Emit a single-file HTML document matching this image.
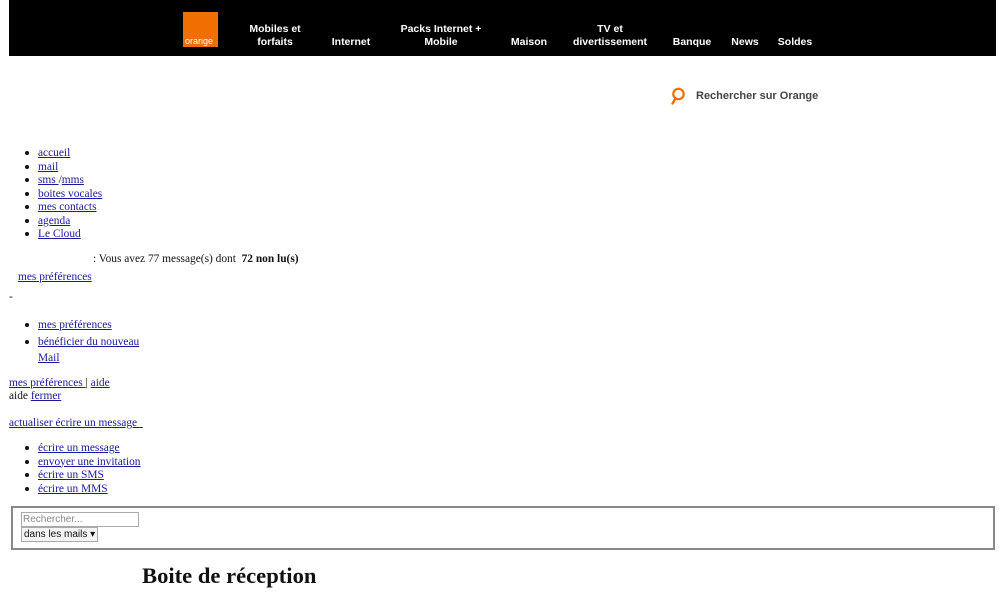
<!DOCTYPE html>
<html><head><meta charset="utf-8"><style>
body{margin:0;width:999px;height:602px;background:#fff;font-family:"Liberation Serif",serif;font-size:11.4px;color:#111;position:relative;overflow:hidden}
a{color:#1a1a9a;text-decoration:underline}
.a{position:absolute;white-space:nowrap}
.bar{position:absolute;left:9px;top:0;width:987px;height:56px;background:#000}
.nav{position:absolute;color:#fff;font-family:"Liberation Sans",sans-serif;font-weight:bold;font-size:10.5px;text-align:center;line-height:13px}
.logo{position:absolute;left:183px;top:12px;width:35px;height:35px;background:#f16e00}
.logo span{position:absolute;left:2px;bottom:1px;color:#fff;font:9px "Liberation Sans",sans-serif}
ul{margin:0;padding:0;list-style:none}
li{position:relative;padding-left:0}
li:before{content:"";position:absolute;left:-13px;top:4px;width:4px;height:4px;border-radius:50%;background:#111}
ul.t li:before{top:6px}
</style></head><body>
<div class="bar"></div>
<div class="logo"><span>orange</span></div>
<div class="nav" style="left:240px;top:23px;width:70px">Mobiles et<br>forfaits</div>
<div class="nav" style="left:326px;top:36px;width:50px">Internet</div>
<div class="nav" style="left:395px;top:23px;width:92px">Packs Internet +<br>Mobile</div>
<div class="nav" style="left:505px;top:36px;width:48px">Maison</div>
<div class="nav" style="left:570px;top:23px;width:80px">TV et<br>divertissement</div>
<div class="nav" style="left:668px;top:36px;width:48px">Banque</div>
<div class="nav" style="left:728px;top:36px;width:34px">News</div>
<div class="nav" style="left:775px;top:36px;width:40px">Soldes</div>
<svg class="a" style="left:668px;top:87px" width="18" height="18" viewBox="0 0 18 18"><circle cx="10.5" cy="7" r="5.2" fill="none" stroke="#f16e00" stroke-width="2.2"/><line x1="7.5" y1="11.5" x2="4.5" y2="16.5" stroke="#f16e00" stroke-width="2.4" stroke-linecap="round"/></svg>
<div class="a" style="left:696px;top:90px;font:bold 11px 'Liberation Sans',sans-serif;color:#444">Rechercher sur Orange</div>
<ul class="a" style="left:38px;top:147px;line-height:13.5px">
<li><a>accueil</a></li><li><a>mail</a></li><li><a>sms </a>/<a>mms</a></li><li><a>boites vocales</a></li><li><a>mes contacts</a></li><li><a>agenda</a></li><li><a>Le Cloud</a></li></ul>
<div class="a" style="left:93px;top:253px">: Vous avez 77 message(s) dont &nbsp;<b>72 non lu(s)</b></div>
<div class="a" style="left:18px;top:271px"><a>mes préférences</a></div>
<div class="a" style="left:9px;top:291px">-</div>
<ul class="a t" style="left:38px;top:317px;line-height:16.5px">
<li><a>mes préférences</a></li><li><a>bénéficier du nouveau<br>Mail</a></li></ul>
<div class="a" style="left:9px;top:377px"><a>mes préférences </a> | <a>aide</a></div>
<div class="a" style="left:9px;top:390px">aide <a>fermer</a></div>
<div class="a" style="left:9px;top:417px"><a>actualiser écrire un message&nbsp;&nbsp;</a></div>
<ul class="a" style="left:38px;top:442px;line-height:13.5px">
<li><a>écrire un message</a></li><li><a>envoyer une invitation</a></li><li><a>écrire un SMS</a></li><li><a>écrire un MMS</a></li></ul>
<div class="a" style="left:11px;top:506px;width:980px;height:40px;border:2px solid #888"></div>
<div class="a" style="left:21px;top:512px;width:115px;height:13px;border:1px solid #aaa;font:10px 'Liberation Sans',sans-serif;color:#888;line-height:13px;padding-left:1px">Rechercher...</div>
<div class="a" style="left:21px;top:527px;height:13px;border:1px solid #aaa;background:#f4f4f4;font:10px 'Liberation Sans',sans-serif;color:#111;line-height:13px;padding:0 2px">dans les mails ▾</div>
<div class="a" style="left:142px;top:563px;font-weight:bold;font-size:22.6px">Boite de réception</div>
</body></html>
